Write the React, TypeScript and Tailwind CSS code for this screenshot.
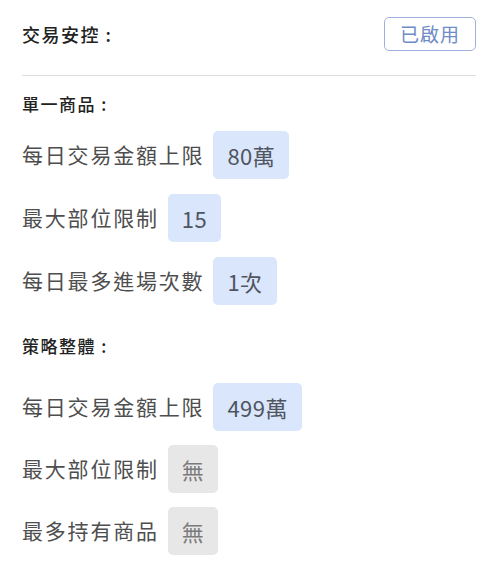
import React from 'react'

type Limit = {
  label: string
  value: string
  active: boolean
}

const singleItem: Limit[] = [
  { label: '每日交易金額上限', value: '80萬', active: true },
  { label: '最大部位限制', value: '15', active: true },
  { label: '每日最多進場次數', value: '1次', active: true },
]

const strategyWide: Limit[] = [
  { label: '每日交易金額上限', value: '499萬', active: true },
  { label: '最大部位限制', value: '無', active: false },
  { label: '最多持有商品', value: '無', active: false },
]

const font = { fontFamily: '"Noto Sans CJK TC", "Noto Sans", sans-serif' }

function LimitRow({ item }: { item: Limit }) {
  return (
    <div className="flex h-[48px] items-center gap-[9px]">
      <span className="text-[21px] tracking-[1.8px] text-[#4e4e4e]">{item.label}</span>
      <span
        className={`flex h-[48px] items-center rounded-[5px] px-[14px] text-[22px] tracking-[0.5px] ${
          item.active ? 'bg-[#dae6fb] text-[#4f5561]' : 'bg-[#e7e7e7] text-[#7a7a7a]'
        }`}
      >
        {item.value}
      </span>
    </div>
  )
}

export default function App() {
  return (
    <div className="h-[585px] w-[491px] bg-white pl-[22px] pr-[15px] pt-[17px]" style={font}>
      <div className="flex h-[34px] items-center justify-between">
        <h1 className="text-[18px] font-medium tracking-[1.5px] text-[#222]">交易安控 :</h1>
        <span className="flex h-[34px] w-[92px] items-center justify-center rounded-[5px] border border-[#9db2de] text-[19px] tracking-[1px] text-[#6f8bc8]">
          已啟用
        </span>
      </div>
      <div className="mt-[24px] h-px bg-[#dedede]" />

      <h2 className="mt-[16px] text-[17px] leading-[24px] font-medium tracking-[1.5px] text-[#222]">單一商品 :</h2>
      <div className="mt-[15px] flex flex-col gap-[15px]">
        {singleItem.map((item) => (
          <LimitRow key={item.label} item={item} />
        ))}
      </div>

      <h2 className="mt-[29px] text-[17px] leading-[24px] font-medium tracking-[1.5px] text-[#222]">策略整體 :</h2>
      <div className="mt-[25px] flex flex-col gap-[14px]">
        {strategyWide.map((item) => (
          <LimitRow key={item.label} item={item} />
        ))}
      </div>
    </div>
  )
}
